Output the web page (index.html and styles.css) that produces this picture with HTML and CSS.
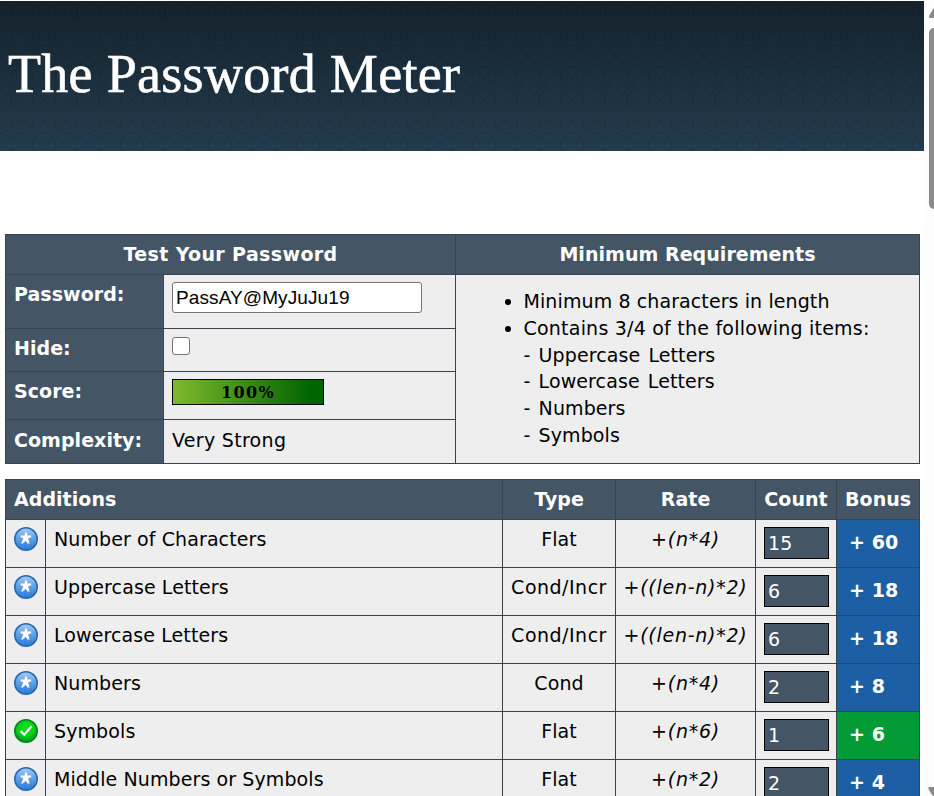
FILE: index.html
```html
<!DOCTYPE html>
<html lang="en">
<head>
<meta charset="utf-8">
<title>The Password Meter</title>
<link rel="stylesheet" href="styles.css">
</head>
<body>
<svg class="defs" width="0" height="0" aria-hidden="true">
  <defs>
    <linearGradient id="blue" x1="0" y1="0" x2="0" y2="1"><stop offset="0" stop-color="#a4cdf4"/><stop offset=".5" stop-color="#5b9ee4"/><stop offset="1" stop-color="#2b7cd6"/></linearGradient>
    <radialGradient id="green" cx=".5" cy=".35" r=".6"><stop offset="0" stop-color="#0be51c"/><stop offset=".65" stop-color="#05cf18"/><stop offset="1" stop-color="#009b1c"/></radialGradient>
    <symbol id="star" viewBox="0 0 24 24">
      <circle cx="12" cy="12" r="11.2" fill="url(#blue)" stroke="#2b68b2" stroke-width="1.6"/>
      <path d="M11.2 5.600H12.800L13.400 8.600H17.200V10.200L14.200 11.500L15.600 16.600H13.700L11.600 13.700L8.800 16.600H7.100L9.300 11.500L6.600 10V8.600H10.500Z" fill="#fff"/>
    </symbol>
    <symbol id="check" viewBox="0 0 24 24">
      <circle cx="12" cy="12" r="11.2" fill="url(#green)" stroke="#078424" stroke-width="1.6"/>
      <path d="M6.6 12.1 10.3 15.6 17.5 7.3" fill="none" stroke="#fff" stroke-width="2.2"/>
    </symbol>
  </defs>
</svg>
<div class="window">
  <div class="page">
    <header class="banner">
      <svg class="weave" width="924" height="150" aria-hidden="true">
        <defs><pattern id="weave" width="22" height="22" patternUnits="userSpaceOnUse">
          <path d="M0 0Q11 2 11 11T22 22M22 0Q11 2 11 11T0 22M0 11Q5 5 11 0Q17 5 22 11Q17 17 11 22Q5 17 0 11M5 11A6 6 0 0 0 17 11A6 6 0 0 0 5 11" fill="none" stroke="#000" stroke-width="1"/>
        </pattern></defs>
        <rect width="924" height="150" fill="url(#weave)" opacity=".1"/>
      </svg>
      <h1><span>The Password Meter</span></h1>
    </header>
    <main>
      <table class="test">
        <colgroup><col class="c-label"><col class="c-field"><col class="c-req"></colgroup>
        <tr class="r-head"><th colspan="2" class="wide"><span>Test Your Password</span></th><th><span>Minimum Requirements</span></th></tr>
        <tr class="r-pass"><th class="left"><span>Password:</span></th><td><input class="pwd" type="text" value="PassAY@MyJuJu19"></td>
          <td rowspan="4" class="req">
            <ul>
              <li><span>Minimum 8 characters in length</span></li>
              <li><span class="rule">Contains 3/4 of the following items:</span><br><span class="kind">- Uppercase Letters</span><br><span class="kind">- Lowercase Letters</span><br><span class="kind">- Numbers</span><br><span class="kind">- Symbols</span></li>
            </ul>
          </td></tr>
        <tr class="r-hide"><th class="left"><span>Hide:</span></th><td><div class="check"></div></td></tr>
        <tr class="r-score"><th class="left"><span>Score:</span></th><td><div class="score"><span>100%</span></div></td></tr>
        <tr class="r-complex"><th class="left"><span>Complexity:</span></th><td class="verdict"><span>Very Strong</span></td></tr>
      </table>
      <table class="tally">
        <colgroup><col class="c-icon"><col class="c-name"><col class="c-type"><col class="c-rate"><col class="c-count"><col class="c-bonus"></colgroup>
        <tr class="r-head"><th colspan="2" class="left"><span>Additions</span></th><th><span>Type</span></th><th><span>Rate</span></th><th><span>Count</span></th><th><span>Bonus</span></th></tr>
        <tr><td><svg class="icon"><use href="#star"/></svg></td><td><span>Number of Characters</span></td><td class="mid"><span>Flat</span></td><td class="mid rate"><span>+(n*4)</span></td><td><div class="count">15</div></td><td class="bonus"><span>+ 60</span></td></tr>
        <tr><td><svg class="icon"><use href="#star"/></svg></td><td><span>Uppercase Letters</span></td><td class="mid cond"><span>Cond/Incr</span></td><td class="mid rate"><span>+((len-n)*2)</span></td><td><div class="count">6</div></td><td class="bonus"><span>+ 18</span></td></tr>
        <tr><td><svg class="icon"><use href="#star"/></svg></td><td><span>Lowercase Letters</span></td><td class="mid cond"><span>Cond/Incr</span></td><td class="mid rate"><span>+((len-n)*2)</span></td><td><div class="count">6</div></td><td class="bonus"><span>+ 18</span></td></tr>
        <tr><td><svg class="icon"><use href="#star"/></svg></td><td><span>Numbers</span></td><td class="mid"><span>Cond</span></td><td class="mid rate"><span>+(n*4)</span></td><td><div class="count">2</div></td><td class="bonus"><span>+ 8</span></td></tr>
        <tr><td><svg class="icon"><use href="#check"/></svg></td><td><span>Symbols</span></td><td class="mid"><span>Flat</span></td><td class="mid rate"><span>+(n*6)</span></td><td><div class="count">1</div></td><td class="bonus pass"><span>+ 6</span></td></tr>
        <tr><td><svg class="icon"><use href="#star"/></svg></td><td><span>Middle Numbers or Symbols</span></td><td class="mid"><span>Flat</span></td><td class="mid rate"><span>+(n*2)</span></td><td><div class="count">2</div></td><td class="bonus"><span>+ 4</span></td></tr>
      </table>
    </main>
  </div>
  <div class="scrollbar">
    <svg width="10" height="28" viewBox="0 0 10 28"><path d="M10 7.5 5 16Q4.5 18 6 18H10Z" fill="#8b8b8b"/></svg>
    <div class="thumb"></div>
    <svg class="down" width="10" height="12" viewBox="0 0 10 12"><path d="M10 3H5Q4 3.500 4.500 5L8 11 10 12Z" fill="#8b8b8b"/></svg>
  </div>
</div>
</body>
</html>
```
FILE: styles.css
```css
* { box-sizing: border-box; }
html, body { margin: 0; height: 796px; overflow: hidden; background: #fff; }
body { font: 19px/24px "DejaVu Sans", sans-serif; color: #000; }
.defs { position: absolute; }
.window { display: flex; height: 796px; overflow: hidden; }
.page { width: 924px; flex: none; }
.banner {
  position: relative;
  height: 150px;
  margin-top: 1px;
  padding: 43px 0 0 8px;
  background: linear-gradient(#15222c, #1b2e3c 45%, #243d50);
}
.weave { position: absolute; inset: 0; }
h1 {
  position: relative;
  margin: 0;
  font: 400 54px/60px "Liberation Serif", serif;
  letter-spacing: 0.3px;
  -webkit-text-stroke: 0.6px #fff;
  color: #fff;
  white-space: nowrap;
}
main { padding: 83px 0 0 5px; }
table { width: 915px; table-layout: fixed; border-collapse: collapse; margin-bottom: 15px; }
th, td { border: 1px solid #37444f; padding: 7px 8px 0; vertical-align: top; white-space: nowrap; }
th { background: #445566; color: #fff; text-align: center; letter-spacing: 0.05px; }
td { background: #eee; letter-spacing: 0.1px; }
.wide { letter-spacing: 0.38px; }
.left { text-align: left; }
.mid { text-align: center; padding-left: 0; padding-right: 0; }
.cond { letter-spacing: 0.5px; }
.verdict { letter-spacing: 0.3px; }
.rate { font-style: italic; letter-spacing: 0.75px; }
.c-label { width: 158px; }
.c-field { width: 292px; }
.c-req { width: 464px; }
.c-icon { width: 40px; }
.c-name { width: 457px; }
.c-type { width: 113px; }
.c-rate { width: 140px; }
.c-count { width: 81px; }
.c-bonus { width: 83px; }
tr { height: 48px; }
.r-head { height: 40px; }
.r-pass { height: 54px; }
.r-hide { height: 43px; }
.r-score { height: 48px; }
.r-complex { height: 44px; }
.r-complex th, .r-complex td { padding-top: 8px; }
.pwd {
  display: block;
  width: 250px;
  height: 31px;
  padding: 0 3px;
  border: 1px solid #767676;
  border-radius: 3px;
  background: #fff;
  font: 19px "Liberation Sans", sans-serif;
  letter-spacing: 0.1px;
  color: #000;
}
.check { width: 18px; height: 18px; margin-top: 1px; border: 1px solid #767676; border-radius: 3px; background: #fff; }
.score {
  width: 152px;
  height: 26px;
  border: 1px solid #000;
  background: linear-gradient(90deg, #80b92c, #006400 92%);
  font: bold 16px/25px "DejaVu Serif", serif;
  letter-spacing: 1.4px;
  text-align: center;
}
.req { padding: 13px 8px 0 67.5px; }
ul { margin: 0; padding: 0; list-style: disc outside; line-height: 26.8px; }
.rule { letter-spacing: 0.22px; }
.kind { letter-spacing: 0.1px; word-spacing: 2px; }
.icon { display: block; width: 24px; height: 24px; }
.count {
  width: 65px;
  height: 32px;
  border: 1px solid #000;
  background: #445566;
  padding-left: 3px;
  line-height: 30px;
  color: #fff;
}
.bonus { background: #1c5fa5; color: #fff; font-weight: bold; padding: 10px 0 0 12px; }
.pass { background: #049b36; }
.scrollbar { width: 10px; background: #fcfcfc; display: flex; flex-direction: column; }
.scrollbar svg { display: block; flex: none; }
.thumb { width: 5px; height: 181px; margin-left: 5px; background: #8b8b8b; border-radius: 5px 0 0 5px; }
.scrollbar .down { margin-top: auto; }
```
